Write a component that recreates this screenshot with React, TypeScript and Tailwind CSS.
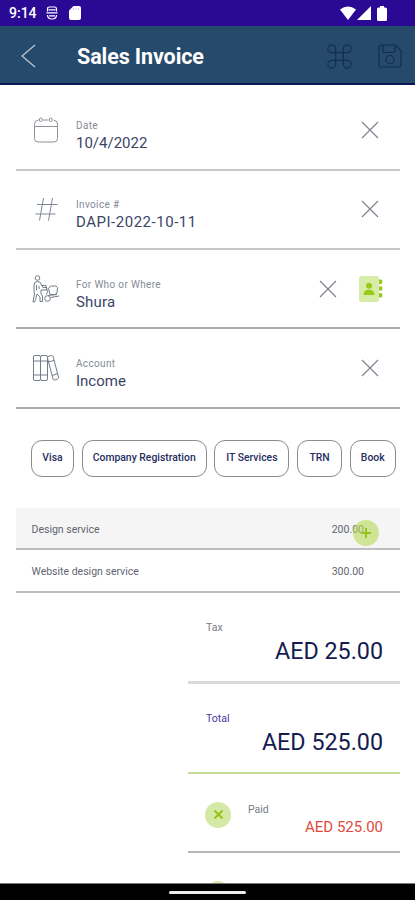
import React from 'react';
import { Command } from 'lucide-react';

const CalendarIcon = () => (
  <svg className="w-7 h-7" viewBox="0 0 28 28" fill="none" stroke="#8d9299" strokeWidth="1">
    <path d="M6.500 4Q2.500 4.500 2.500 8v14.500q0 3.500 3.500 3.500h16q3.500 0 3.500-3.500V8q0-3.500-4-4M10.500 4h6" />
    <path d="M2.500 10.500h23" />
    <rect x="7.500" y="2" width="2.500" height="3.500" rx="1" />
    <rect x="17.500" y="2" width="2.500" height="3.500" rx="1" />
  </svg>
);

const HashIcon = () => (
  <svg className="w-7 h-7" viewBox="0 0 28 28" fill="none" stroke="#7d8794" strokeWidth="1">
    <path d="M11.500 3 7.500 25.500M20.500 3l-4 22.500" />
    <path d="M5 9.500h20.500M3.500 19h20" />
  </svg>
);

const PersonCartIcon = () => (
  <svg className="w-7 h-7" viewBox="0 0 28 28" fill="none" stroke="#737d89" strokeWidth="1" strokeLinejoin="round">
    <circle cx="5.500" cy="3" r="2.300" />
    <path d="M2 10q0-3.500 3.500-3.500T9.500 10l1.500 2.500h3.500v2.500H9v4l1.500 2v5.500H8V22l-3-3-1.500 5.500-1 2.500H1l1.500-8-.5-3Z" />
    <path d="M4.500 10v5.500M7 11v3M9.500 10.500h4.500l1.500 6-1 3" />
    <path d="M16.500 13.500 18.500 11h5.500l1.500 1.500-.5 5.500-2 1.500h-5Z" />
    <circle cx="15.500" cy="23.500" r="2.800" />
    <path d="m18.500 22.500 8.500-1.500M16 20.500l9-1" />
  </svg>
);

const BooksIcon = () => (
  <svg className="w-7 h-7" viewBox="0 0 28 28" fill="none" stroke="#737d89" strokeWidth="1">
    <rect x="1.500" y="1.500" width="7" height="25" rx="1.500" />
    <rect x="8.500" y="1.500" width="7" height="25" rx="1.500" />
    <path d="M1.500 7h14M1.500 21h14" />
    <path d="m16 2.500 3.500-1q1-.3 1.500.7l5.500 21q.3 1.300-.8 1.800l-3 1q-1.200.3-1.600-.8L15.500 4M16 8l6-1.500M20 21.500l6-2" />
  </svg>
);

const ContactIcon = () => (
  <svg className="w-[26px] h-[28px]" viewBox="0 0 26 28">
    <rect x="1" y="1" width="20" height="26" rx="2.500" fill="#d8ecaa" />
    <circle cx="11" cy="10.700" r="3" fill="#9aca18" />
    <path d="M5.700 20v-1.200c0-2.500 2.300-4 5.300-4s5.300 1.500 5.300 4V20Z" fill="#9aca18" />
    <path d="M21 4.500h1.800q1.500 0 1.500 1.500v1.500q0 1.500-1.500 1.500H21ZM21 11.500h3.300v4H21ZM21 18h1.800q1.500 0 1.500 1.500V21q0 1.500-1.500 1.500H21Z" fill="#9aca18" />
  </svg>
);

const ClearIcon = () => (
  <svg className="w-[18px] h-[18px]" viewBox="0 0 18 18" fill="none" stroke="#7b818c" strokeWidth="1.100">
    <path d="m1 1 16 16M17 1 1 17" />
  </svg>
);

const StatusBar = () => (
  <div className="h-[26px] bg-[#2a0a94] flex items-center text-white pl-[9px] pr-[28px]">
    <span className="text-[14px] font-medium w-[37px] pt-px">9:14</span>
    <svg className="w-3 h-[14px]" viewBox="0 0 12 14" fill="none" stroke="#fff" strokeWidth="1.200">
      <path d="M1.500 5.500V3q0-2 2-2h5q2 0 2 2v2.500M1.500 9q0 4 4.500 4t4.500-4M2.500 3.800h7M.5 6.800h11M3 9.800h6" />
    </svg>
    <svg className="w-3 h-[14px] ml-[11px]" viewBox="0 0 12 14" fill="#fff">
      <path d="M4.500 0H10q2 0 2 2v10q0 2-2 2H2q-2 0-2-2V4.500Z" />
      <path d="M4.500 2v2M7 2v2M9.500 2v2" stroke="#d5cdea" />
    </svg>
    <div className="flex items-center ml-auto">
      <svg className="w-4 h-[14px]" viewBox="0 0 16 14" fill="#fff">
        <path d="M0 3.500Q8-2.500 16 3.500L8 14Z" />
      </svg>
      <svg className="w-[14px] h-[14px] ml-[1px]" viewBox="0 0 14 14" fill="#fff">
        <path d="M14 0v14H0Z" />
      </svg>
      <svg className="w-[10px] h-[15px] ml-[6px]" viewBox="0 0 10 15" fill="#fff">
        <path d="M3 0h4v1.500h1.500Q10 1.500 10 3v10.500q0 1.500-1.500 1.500h-7Q0 15 0 13.500V3q0-1.500 1.500-1.500H3Z" />
      </svg>
    </div>
  </div>
);

const Header = () => (
  <header className="h-[59px] bg-[#264a6b] border-b-2 border-[#0b1a55] flex items-center pl-[21px] pr-[13px]">
    <svg className="w-[15px] h-6 mt-[3px]" viewBox="0 0 15 24" fill="none" stroke="#c0cbd7" strokeWidth="1.200">
      <path d="M14 1 1 12l13 11" />
    </svg>
    <h1 className="ml-[41px] mt-[4px] text-[21.500px] leading-7 font-bold text-white tracking-[-0.1px]">Sales Invoice</h1>
    <Command className="w-[31px] h-[31px] ml-auto mt-[3px] text-[#132f4d]" strokeWidth={0.9} />
    <svg className="w-6 h-6 ml-[23px] mt-[3px]" viewBox="0 0 24 24" fill="none" stroke="#132f4d" strokeWidth="1.200">
      <path d="M3.500 1h14L23 6.500v14q0 2.500-2.500 2.500h-17Q1 23 1 20.500v-17Q1 1 3.500 1Z" />
      <path d="M5 1v5.500q0 2 2 2h8q2 0 2-2V1" />
      <circle cx="12" cy="15.500" r="4" />
    </svg>
  </header>
);

interface FieldProps {
  icon: React.ReactNode;
  label: string;
  value: string;
  spacing: string;
  dark?: boolean;
  contact?: boolean;
}

const Field: React.FC<FieldProps> = ({ icon, label, value, spacing, dark, contact }) => (
  <div className={`h-[79.300px] border-b-2 flex items-center pl-4 ${dark ? 'border-[#a9abad]' : 'border-[#c6c7c9]'}`}>
    {icon}
    <div className="ml-4 mt-[12px] flex flex-col">
      <span className="text-[10px] leading-[15px] text-[#868b96] tracking-[0.350px]">{label}</span>
      <span className={`text-[15px] leading-[21px] text-[#3d4566] ${spacing}`}>{value}</span>
    </div>
    <div className={`ml-auto flex items-center ${contact ? 'gap-[21px] pr-[16px]' : 'pr-[21px]'}`}>
      <ClearIcon />
      {contact && <ContactIcon />}
    </div>
  </div>
);

const tags = [
  { name: 'Visa', width: 'w-[43px]' },
  { name: 'Company Registration', width: 'w-[125px]' },
  { name: 'IT Services', width: 'w-[75px]' },
  { name: 'TRN', width: 'w-[45px]' },
  { name: 'Book', width: 'w-[46px]' },
];

const App = () => {
  return (
    <div className="w-[415px] h-[900px] overflow-hidden bg-white flex flex-col font-['Roboto',sans-serif]">
      <StatusBar />
      <Header />
      <main className="flex-1 min-h-0 overflow-hidden pt-[6.500px]">
        <section className="ml-4 mr-[15px]">
          <Field icon={<CalendarIcon />} label="Date" value="10/4/2022" spacing="" />
          <Field icon={<HashIcon />} label="Invoice #" value="DAPI-2022-10-11" spacing="tracking-[0.520px]" />
          <Field icon={<PersonCartIcon />} label="For Who or Where" value="Shura" spacing="tracking-[0.200px]" dark contact />
          <Field icon={<BooksIcon />} label="Account" value="Income" spacing="" dark />
        </section>

        <section className="flex gap-[7.700px] pl-[31px] mt-[31px]">
          {tags.map((tag) => (
            <button
              key={tag.name}
              className={`${tag.width} h-[37px] shrink-0 rounded-[11px] border border-[#8b8b90] text-[10.400px] font-medium text-[#272f62] whitespace-nowrap`}
            >
              {tag.name}
            </button>
          ))}
        </section>

        <section className="ml-4 mr-[15px] mt-[31.500px] text-[10.500px] text-[#61656f]">
          <div className="relative h-[42px] bg-[#f5f5f5] border-b-2 border-[#bdbebf] flex items-center justify-between pl-[15.500px] pr-[36px] pt-[3px]">
            <span>Design service</span>
            <span>200.00</span>
            <button className="absolute right-[21px] top-[12px] w-[26px] h-[26px] rounded-full bg-[#b5da55]/60 flex items-center justify-center">
              <svg className="w-[10px] h-[10px]" viewBox="0 0 10 10" stroke="#94c51c" strokeWidth="2">
                <path d="M5 0v10M0 5h10" />
              </svg>
            </button>
          </div>
          <div className="h-[42.500px] border-b-2 border-[#bdbebf] flex items-center justify-between pl-[15.500px] pr-[36px] pt-[2px]">
            <span>Website design service</span>
            <span>300.00</span>
          </div>
        </section>

        <section className="ml-[188px] mr-[15px]">
          <div className="h-[91px] border-b-3 border-[#d8dada] pl-[18px] pr-[17px] pt-[27px] flex flex-col">
            <span className="text-[10.500px] leading-4 text-[#777b84]">Tax</span>
            <span className="text-[23.300px] leading-[31px] self-end text-[#151b50]">AED 25.00</span>
          </div>
          <div className="h-[90px] border-b-2 border-[#c7dc99] pl-[18px] pr-[17px] pt-[27px] flex flex-col">
            <span className="text-[10.500px] leading-4 text-[#4b37a5]">Total</span>
            <span className="text-[23.300px] leading-[30px] self-end text-[#151b50]">AED 525.00</span>
          </div>
          <div className="h-[79px] border-b-2 border-[#b4b6b8] pl-[17px] pr-[17px] pt-[28px] flex items-start">
            <span className="w-[26px] h-[26px] rounded-full bg-[#d5e9a6] flex items-center justify-center">
              <svg className="w-[9px] h-[9px]" viewBox="0 0 9 9" stroke="#94c51c" strokeWidth="2">
                <path d="m.5.5 8 8M8.500.5l-8 8" />
              </svg>
            </span>
            <div className="ml-[17px] flex-1 flex flex-col">
              <span className="text-[10.500px] leading-4 text-[#777b84]">Paid</span>
              <span className="text-[15px] leading-[19px] self-end text-[#df4a3c]">AED 525.00</span>
            </div>
          </div>
          <div className="ml-[17px] mt-[28px] w-[26px] h-[26px] rounded-full bg-[#d5e9a6]" />
        </section>
      </main>
      <nav className="h-[17px] shrink-0 bg-black border-t border-[#77797b] flex justify-center pt-[7px]">
        <div className="w-[77px] h-[3px] rounded-full bg-[#eeeeee]" />
      </nav>
    </div>
  );
};

export default App;
